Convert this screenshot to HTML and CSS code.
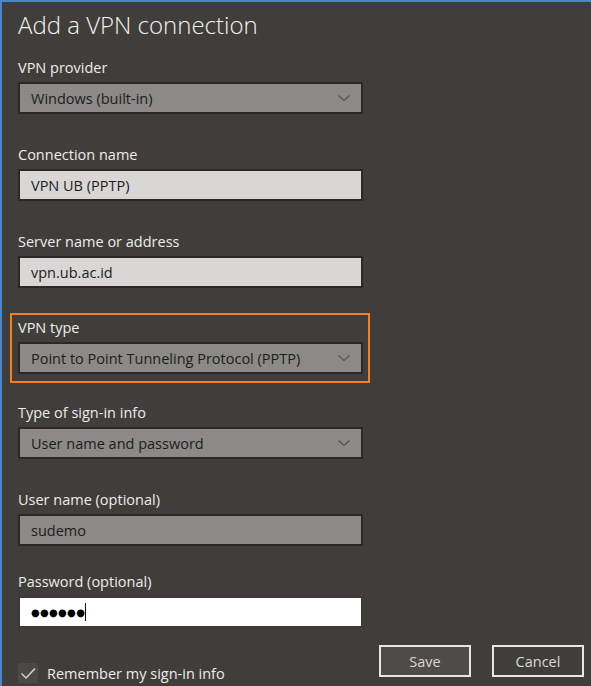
FILE: index.html
```html
<!DOCTYPE html>
<html>
<head>
<meta charset="utf-8">
<link rel="stylesheet" href="styles.css">
</head>
<body>
<div class="dialog">
  <h1 class="title">Add a VPN connection</h1>

  <div class="field">
    <div class="label">VPN provider</div>
    <div class="box select">
      <span>Windows (built-in)</span>
      <svg class="chev" width="14" height="8" viewBox="0 0 14 8"><path d="M1.5 1.5 L7 6.5 L12.5 1.5" fill="none" stroke="#555452" stroke-width="1.2"/></svg>
    </div>
  </div>

  <div class="field">
    <div class="label">Connection name</div>
    <div class="box light"><span>VPN UB (PPTP)</span></div>
  </div>

  <div class="field">
    <div class="label">Server name or address</div>
    <div class="box light"><span>vpn.ub.ac.id</span></div>
  </div>

  <div class="field highlight">
    <div class="label">VPN type</div>
    <div class="box select">
      <span>Point to Point Tunneling Protocol (PPTP)</span>
      <svg class="chev" width="14" height="8" viewBox="0 0 14 8"><path d="M1.5 1.5 L7 6.5 L12.5 1.5" fill="none" stroke="#555452" stroke-width="1.2"/></svg>
    </div>
  </div>

  <div class="field">
    <div class="label">Type of sign-in info</div>
    <div class="box select">
      <span>User name and password</span>
      <svg class="chev" width="14" height="8" viewBox="0 0 14 8"><path d="M1.5 1.5 L7 6.5 L12.5 1.5" fill="none" stroke="#555452" stroke-width="1.2"/></svg>
    </div>
  </div>

  <div class="field">
    <div class="label">User name (optional)</div>
    <div class="box select"><span>sudemo</span></div>
  </div>

  <div class="field password">
    <div class="label">Password (optional)</div>
    <div class="box white"><span class="dots">●●●●●●</span><span class="caret"></span></div>
  </div>

  <div class="footer">
    <div class="remember">
      <div class="check">
        <svg width="20" height="20" viewBox="0 0 20 20"><path d="M3.5 10.5 L8 15 L17 5.5" fill="none" stroke="#d8d8d8" stroke-width="1.4"/></svg>
      </div>
      <span>Remember my sign-in info</span>
    </div>
    <div class="buttons">
      <div class="btn save">Save</div>
      <div class="btn">Cancel</div>
    </div>
  </div>
</div>
</body>
</html>
```

FILE: styles.css
```css
html, body {
  margin: 0;
  padding: 0;
  background: #403e3a;
}
body {
  width: 591px;
  height: 686px;
  overflow: hidden;
}
.dialog {
  box-sizing: border-box;
  width: 591px;
  height: 686px;
  border-top: 2px solid #4a86c8;
  border-left: 2px solid #4a86c8;
  padding: 0 0 0 16px;
  font-family: "Open Sans", "Noto Sans", sans-serif;
  color: #ececec;
  display: flex;
  flex-direction: column;
}
.title {
  margin: 0;
  font-weight: 300;
  font-size: 24px;
  line-height: 30px;
  padding-top: 8px;
  color: #f2f2f2;
  flex: none;
}
.field {
  width: 345px;
  display: flex;
  flex-direction: column;
  gap: 4px;
  margin-top: 18px;
  flex: none;
}
.field + .field {
  margin-top: 31px;
}
.label {
  font-size: 14.5px;
  line-height: 20px;
  height: 20px;
}
.box {
  box-sizing: border-box;
  height: 32px;
  border: 2px solid #2a2927;
  display: flex;
  align-items: center;
  padding-left: 11px;
  padding-right: 10px;
  font-size: 14.5px;
  color: #1c1c1c;
}
.select {
  background: #8b8a87;
  justify-content: space-between;
}
.light {
  background: #d8d7d5;
}
.white {
  background: #ffffff;
  border-color: #3a3936;
}
.chev {
  display: block;
}
.dots {
  font-size: 10px;
  letter-spacing: 0.3px;
  color: #000;
  font-family: "DejaVu Sans", sans-serif;
}
.caret {
  display: inline-block;
  width: 1px;
  height: 18px;
  background: #111;
  margin-left: 0;
}
.field + .field.highlight {
  border: 2px solid #f57f20;
  padding: 3px 5px 7px 6px;
  margin-left: -8px;
  margin-right: -7px;
  margin-top: 25px;
}
.field + .highlight + .field {
  margin-top: 20px;
}
.field + .field.password {
  margin-top: 26px;
}
.footer {
  width: 566px;
  display: flex;
  justify-content: space-between;
  align-items: flex-end;
  margin-top: 17px;
  flex: none;
}
.remember {
  display: flex;
  align-items: center;
  gap: 9px;
  font-size: 14.5px;
  height: 20px;
  margin-top: 17px;
}
.check {
  width: 20px;
  height: 20px;
  background: #4b4946;
}
.check svg {
  display: block;
}
.buttons {
  display: flex;
  gap: 21px;
  margin-bottom: 6px;
}
.btn {
  box-sizing: border-box;
  width: 92px;
  height: 32px;
  border: 2px solid #e6e6e6;
  display: flex;
  align-items: center;
  justify-content: center;
  font-size: 14.5px;
  color: #d8d8d8;
}
.save {
  background: #4f4b48;
}
```
